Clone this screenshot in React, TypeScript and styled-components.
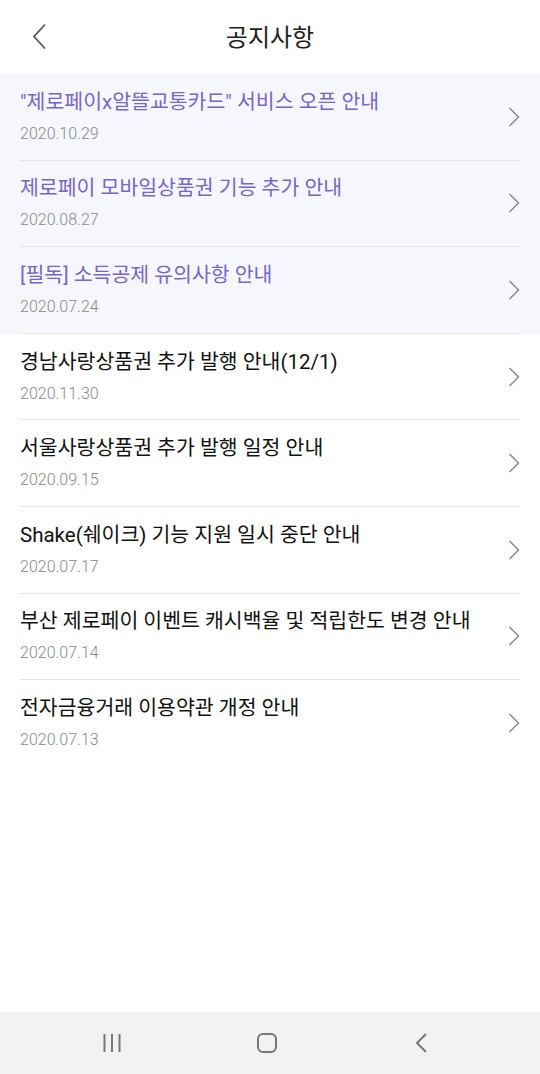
import React from "react";
import styled, { createGlobalStyle } from "styled-components";

const GlobalStyle = createGlobalStyle`
  html, body {
    margin: 0;
    padding: 0;
    background: #ffffff;
  }
  body {
    font-family: Roboto, "Noto Sans CJK KR", sans-serif;
  }
`;

const Screen = styled.div`
  width: 540px;
  height: 1074px;
  display: flex;
  flex-direction: column;
  background: #ffffff;
  overflow: hidden;
`;

const Header = styled.header`
  height: 74px;
  flex-shrink: 0;
  display: grid;
  grid-template-columns: 80px 1fr 80px;
  align-items: center;
`;

const BackButton = styled.button`
  border: 0;
  background: none;
  padding: 0 0 0 32px;
  height: 74px;
  display: flex;
  align-items: center;
  justify-content: flex-start;
`;

const Title = styled.h1`
  margin: 0 0 3px;
  text-align: center;
  font-family: "Noto Sans CJK KR", sans-serif;
  font-size: 24px;
  font-weight: 400;
  color: #1e1e1e;
`;

const List = styled.ul`
  list-style: none;
  margin: 0;
  padding: 0;
  flex: 1;
`;

const Row = styled.li<{ pinned?: boolean }>`
  background: ${({ pinned }) => (pinned ? "#f5f7fd" : "#ffffff")};
  padding: 0 20px;
`;

const RowInner = styled.div<{ last?: boolean }>`
  height: 86.6px;
  box-sizing: border-box;
  display: flex;
  align-items: center;
  border-bottom: ${({ last }) => (last ? "none" : "1px solid #e6e6e8")};
`;

const TextBlock = styled.div`
  flex: 1;
  display: flex;
  flex-direction: column;
  gap: 9px;
  padding-bottom: 1px;
`;

const NoticeTitle = styled.span<{ pinned?: boolean }>`
  font-family: Roboto, "Noto Sans CJK KR", sans-serif;
  font-size: 20.5px;
  line-height: 26px;
  color: ${({ pinned }) => (pinned ? "#7766c9" : "#111111")};
  white-space: nowrap;
`;

const NoticeDate = styled.span`
  font-family: Roboto, sans-serif;
  font-size: 16px;
  line-height: 20px;
  font-weight: 300;
  color: #8a8a8a;
`;

const Chevron = styled.svg`
  flex-shrink: 0;
`;

const NavBar = styled.nav`
  height: 62px;
  flex-shrink: 0;
  background: #f2f2f2;
  display: grid;
  grid-template-columns: repeat(3, 1fr);
  align-items: center;
  justify-items: center;
  padding: 0 40px 0 34px;
`;

const notices = [
  { title: "\"제로페이x알뜰교통카드\" 서비스 오픈 안내", date: "2020.10.29", pinned: true },
  { title: "제로페이 모바일상품권 기능 추가 안내", date: "2020.08.27", pinned: true },
  { title: "[필독] 소득공제 유의사항 안내", date: "2020.07.24", pinned: true },
  { title: "경남사랑상품권 추가 발행 안내(12/1)", date: "2020.11.30" },
  { title: "서울사랑상품권 추가 발행 일정 안내", date: "2020.09.15" },
  { title: "Shake(쉐이크) 기능 지원 일시 중단 안내", date: "2020.07.17" },
  { title: "부산 제로페이 이벤트 캐시백율 및 적립한도 변경 안내", date: "2020.07.14" },
  { title: "전자금융거래 이용약관 개정 안내", date: "2020.07.13" },
];

export default function App() {
  return (
    <>
      <GlobalStyle />
      <Screen>
        <Header>
          <BackButton aria-label="뒤로">
            <svg width="16" height="28" viewBox="0 0 16 28">
              <path d="M13 1.5 L2 13.5 L13 25.5" fill="none" stroke="#555" strokeWidth="1.7" />
            </svg>
          </BackButton>
          <Title>공지사항</Title>
          <span />
        </Header>
        <List>
          {notices.map((n, i) => (
            <Row key={n.date + i} pinned={n.pinned}>
              <RowInner last={i === notices.length - 1}>
                <TextBlock>
                  <NoticeTitle pinned={n.pinned}>{n.title}</NoticeTitle>
                  <NoticeDate>{n.date}</NoticeDate>
                </TextBlock>
                <Chevron width="12" height="20" viewBox="0 0 12 20">
                  <path d="M1.5 1 L10.5 10 L1.5 19" fill="none" stroke="#8a8a8a" strokeWidth="1.5" />
                </Chevron>
              </RowInner>
            </Row>
          ))}
        </List>
        <NavBar>
          <svg width="20" height="20" viewBox="0 0 20 20">
            <path d="M2.5 1 V19 M10 1 V19 M17.5 1 V19" stroke="#777" strokeWidth="2" fill="none" />
          </svg>
          <svg width="22" height="22" viewBox="0 0 22 22">
            <rect x="2" y="2" width="18" height="18" rx="5" fill="none" stroke="#777" strokeWidth="2" />
          </svg>
          <svg width="14" height="20" viewBox="0 0 14 20">
            <path d="M11 1 L2 10 L11 19" fill="none" stroke="#777" strokeWidth="2" />
          </svg>
        </NavBar>
      </Screen>
    </>
  );
}
